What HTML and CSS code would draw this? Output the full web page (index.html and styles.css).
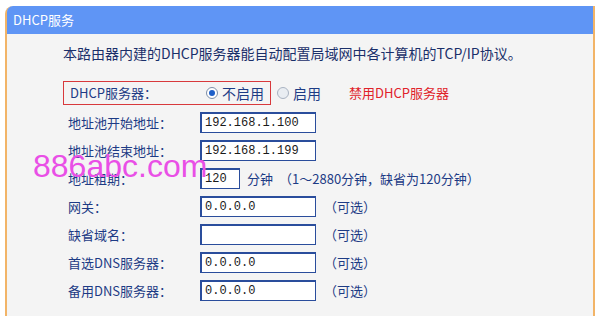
FILE: index.html
```html
<!DOCTYPE html>
<html lang="zh-CN">
<head>
    <meta charset="UTF-8">
    <title>DHCP服务</title>
    <link rel="stylesheet" href="styles.css">
</head>
<body>
    <div class="panel">
        <div class="panel-title">DHCP服务</div>
        <div class="panel-body">
            <p class="intro">本路由器内建的DHCP服务器能自动配置局域网中各计算机的TCP/IP协议。</p>

            <div class="row">
                <div class="server-box">
                    <span class="label">DHCP服务器：</span>
                    <span class="radio checked"></span>
                    <span class="opt">不启用</span>
                </div>
                <span class="radio"></span>
                <span class="opt">启用</span>
                <span class="warn">禁用DHCP服务器</span>
            </div>

            <div class="row">
                <span class="label">地址池开始地址：</span>
                <input class="field" type="text" value="192.168.1.100">
            </div>
            <div class="row">
                <span class="label">地址池结束地址：</span>
                <input class="field" type="text" value="192.168.1.199">
            </div>
            <div class="row">
                <span class="label">地址租期：</span>
                <input class="field short" type="text" value="120">
                <span class="unit">分钟</span>
                <span class="note">（1～2880分钟，缺省为120分钟）</span>
            </div>
            <div class="row">
                <span class="label">网关：</span>
                <input class="field" type="text" value="0.0.0.0">
                <span class="note">（可选）</span>
            </div>
            <div class="row">
                <span class="label">缺省域名：</span>
                <input class="field" type="text" value="">
                <span class="note">（可选）</span>
            </div>
            <div class="row">
                <span class="label">首选DNS服务器：</span>
                <input class="field" type="text" value="0.0.0.0">
                <span class="note">（可选）</span>
            </div>
            <div class="row">
                <span class="label">备用DNS服务器：</span>
                <input class="field" type="text" value="0.0.0.0">
                <span class="note">（可选）</span>
            </div>
        </div>
        <div class="watermark">886abc.com</div>
    </div>
</body>
</html>
```

FILE: styles.css
```css
body {
    margin: 0;
    padding: 6px 1px 0 5px;
    background: #ffffff;
    font-family: "Noto Sans CJK SC", "DejaVu Sans", sans-serif;
    font-size: 13px;
    color: #1d3b85;
    overflow: hidden;
}

.panel {
    position: relative;
    height: 320px;
    background: #f4f4f4;
    border-left: 2px solid #f2b467;
    border-right: 2px solid #f2b467;
    border-top-left-radius: 8px;
}

.panel-title {
    height: 28px;
    line-height: 27px;
    padding-left: 6px;
    background: #5f95f5;
    color: #ffffff;
    font-size: 13px;
    border-top-left-radius: 6px;
}

.panel-body {
    padding: 6px 0 0 56px;
    white-space: nowrap;
}

.intro {
    margin: 0 0 14px 0;
    height: 26px;
    line-height: 26px;
    font-size: 14px;
    color: #1a2f6a;
}

.row {
    display: flex;
    align-items: center;
    height: 28px;
    padding-left: 5px;
}

.row:nth-child(2) {
    height: 25px;
    padding-left: 0;
    margin-bottom: 3px;
}

.server-box {
    display: flex;
    align-items: center;
    height: 22px;
    padding: 0 6px 0 6px;
    border: 1px solid #d8393c;
}

.server-box .label {
    width: 134px;
}

.label {
    width: 132px;
    flex-shrink: 0;
}

.radio {
    flex-shrink: 0;
    width: 12px;
    height: 12px;
    border: 1px solid #a9b3c2;
    border-radius: 50%;
    background: #e9edf2;
    margin-right: 4px;
    margin-left: 2px;
    box-sizing: border-box;
    position: relative;
}

.row > .radio {
    margin-left: 6px;
}

.radio.checked {
    border-color: #7d8ea8;
    background: #ffffff;
}

.radio.checked::after {
    content: "";
    position: absolute;
    left: 2px;
    top: 2px;
    width: 6px;
    height: 6px;
    border-radius: 50%;
    background: #1e5fc8;
}

.opt {
    font-size: 14px;
}

.warn {
    margin-left: 28px;
    color: #e0222a;
    font-size: 13px;
}

.field {
    width: 116px;
    height: 21px;
    box-sizing: border-box;
    border: 1px solid #2a4d9c;
    border-left-width: 2px;
    border-top-width: 2px;
    background: #ffffff;
    padding: 0 3px;
    font-family: "Liberation Mono", monospace;
    font-size: 12px;
    color: #1a1a1a;
    outline: none;
}

.field.short {
    width: 40px;
}

.unit {
    margin-left: 7px;
    font-size: 13px;
}

.note {
    margin-left: 8px;
    font-size: 13px;
}

.unit + .note {
    margin-left: 6px;
}

.watermark {
    position: absolute;
    left: 26px;
    top: 142px;
    font-family: "Liberation Sans", Arial, sans-serif;
    font-size: 32px;
    color: #e94fe6;
}
```
